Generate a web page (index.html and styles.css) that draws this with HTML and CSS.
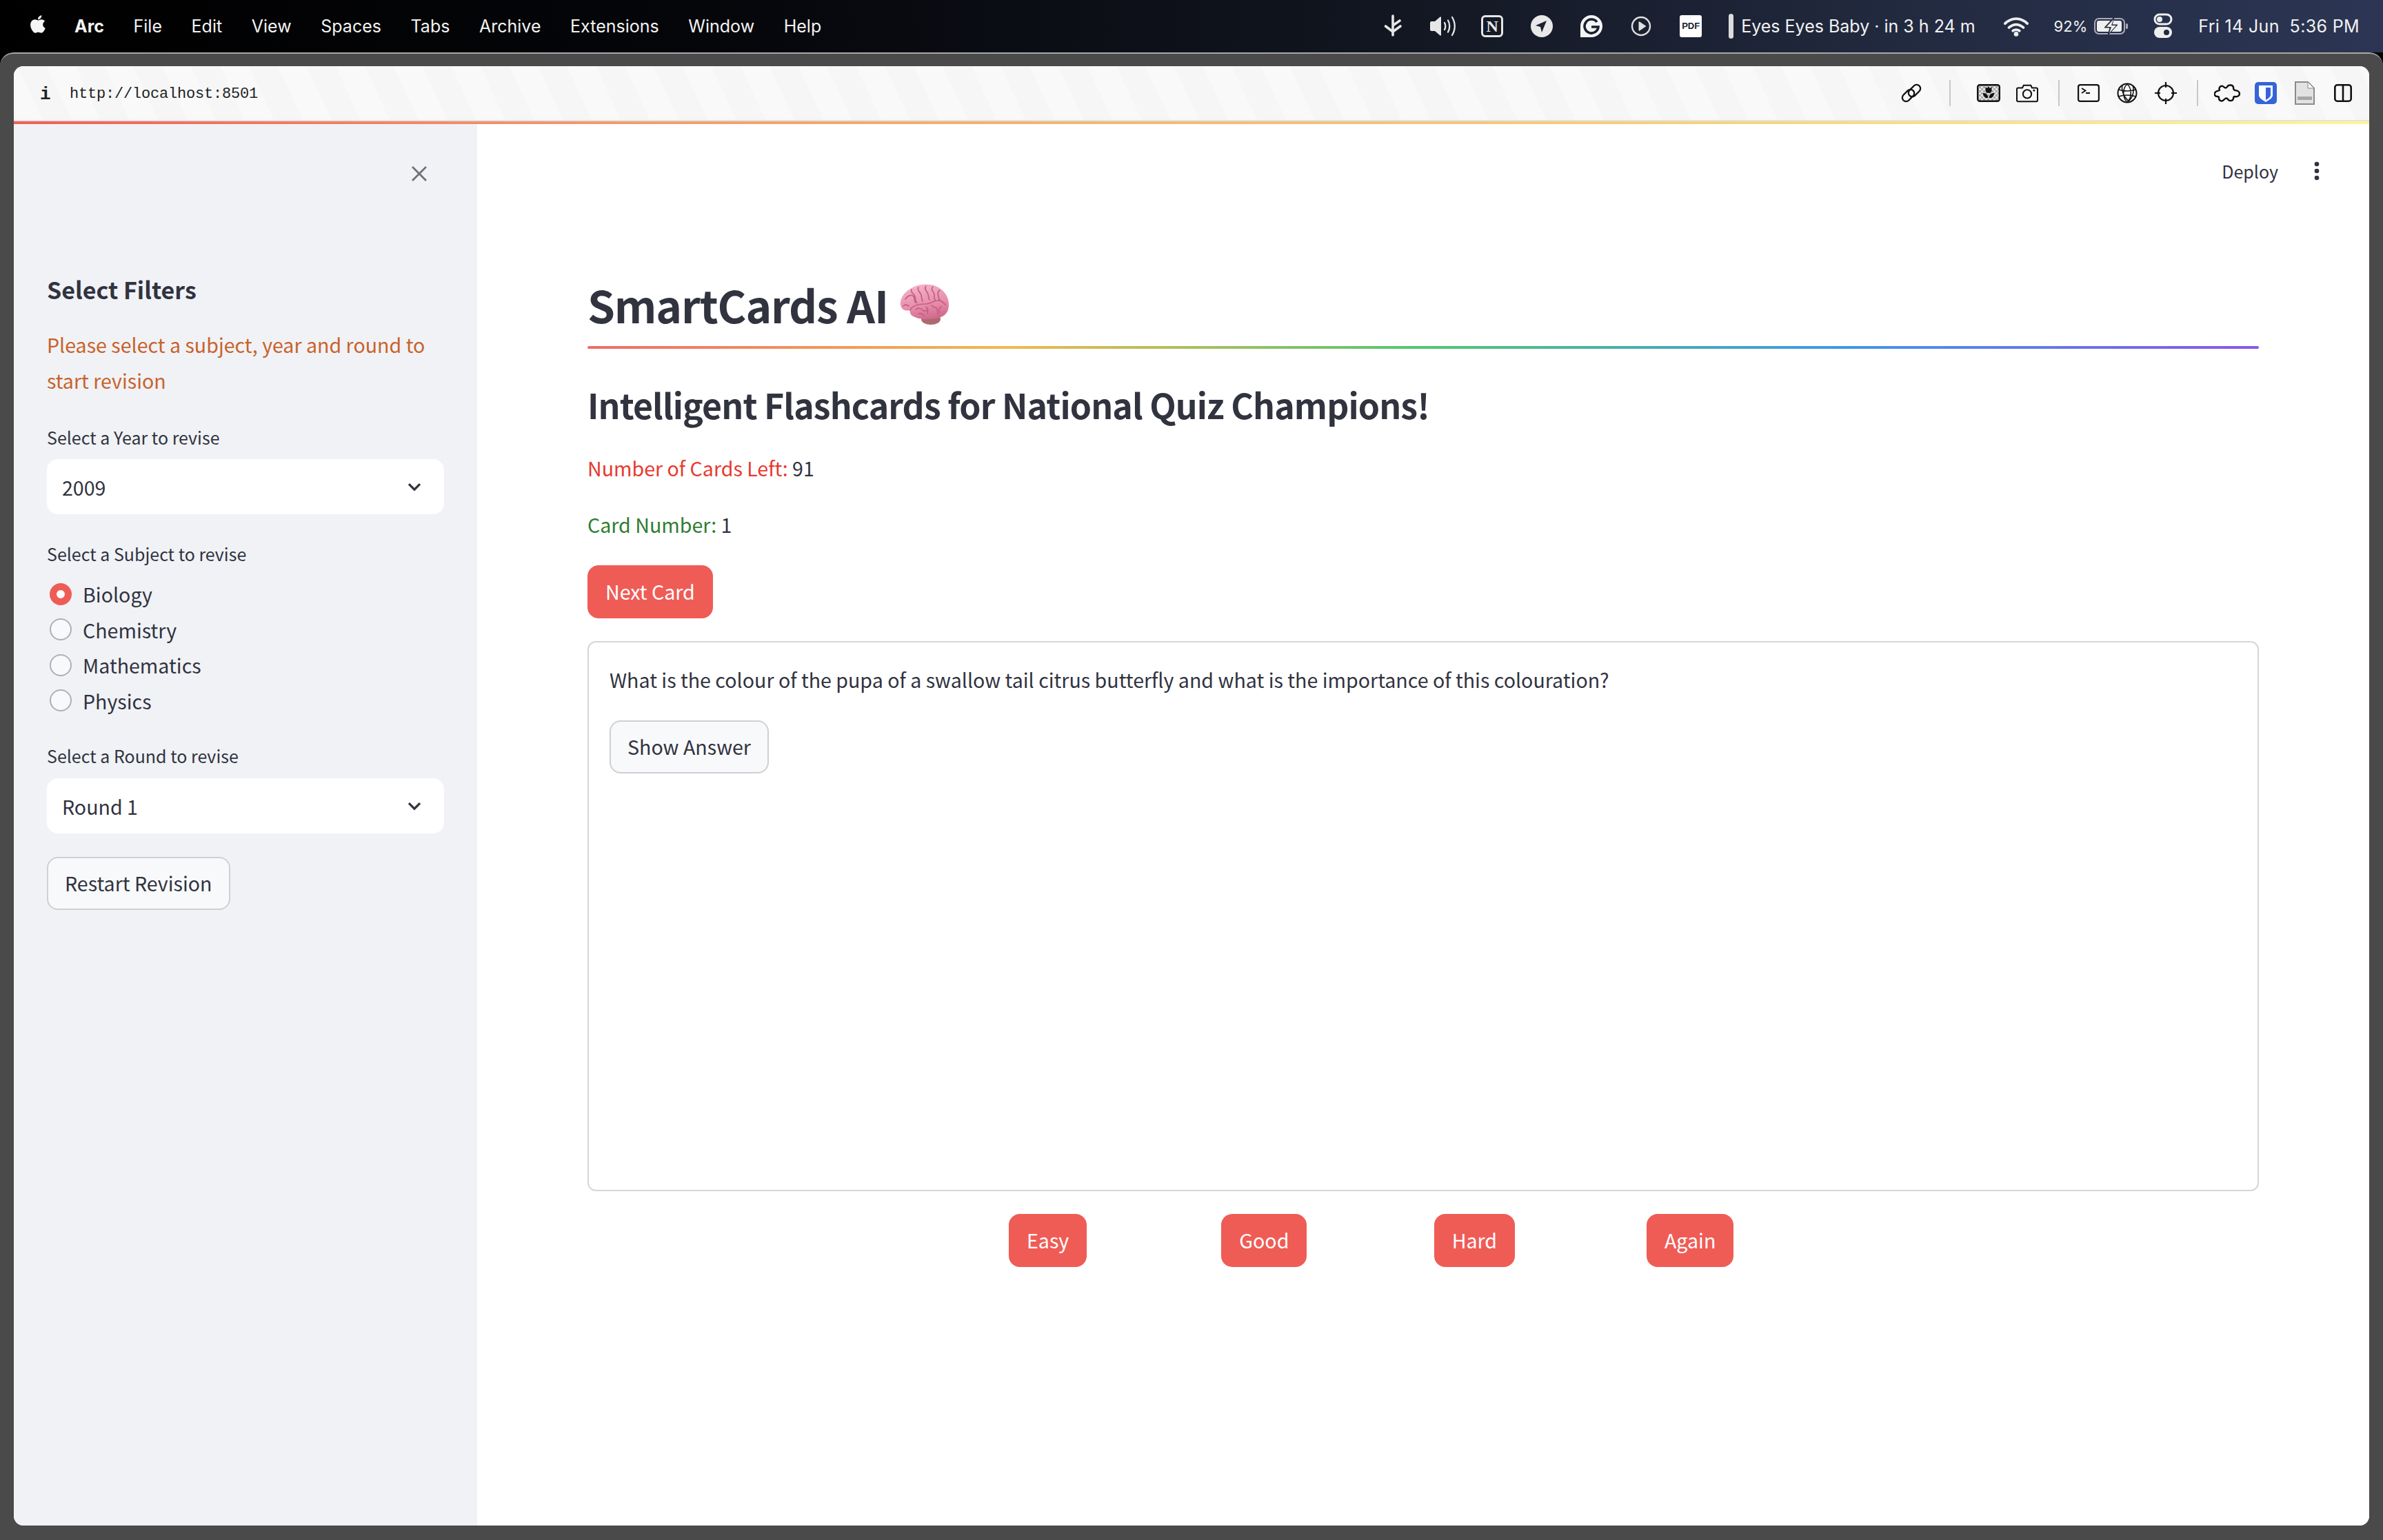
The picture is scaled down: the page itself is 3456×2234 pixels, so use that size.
FILE: index.html
```html
<!DOCTYPE html>
<html lang="en">
<head>
<meta charset="utf-8">
<title>SmartCards AI</title>
<link rel="stylesheet" href="styles.css">
</head>
<body>
<header class="menubar">
  <svg class="apple" viewBox="0 0 24 24"><path d="M17.05 20.28c-.98.95-2.05.8-3.08.35-1.09-.46-2.09-.48-3.24 0-1.44.62-2.2.44-3.06-.35C2.79 15.25 3.51 7.59 9.05 7.31c1.35.07 2.29.74 3.08.8 1.18-.24 2.31-.93 3.57-.84 1.51.12 2.65.72 3.4 1.8-3.12 1.87-2.38 5.98.48 7.13-.57 1.5-1.31 2.99-2.54 4.09zM12.03 7.25c-.15-2.23 1.66-4.07 3.74-4.25.29 2.58-2.34 4.5-3.74 4.25z"/></svg>
  <nav class="menus">
    <span class="menu-app">Arc</span><span>File</span><span>Edit</span><span>View</span><span>Spaces</span><span>Tabs</span><span>Archive</span><span>Extensions</span><span>Window</span><span>Help</span>
  </nav>
  <div class="status">
    <div class="status-icons">
      <svg viewBox="0 0 40 40"><path d="M20 5v28M20 19l10-7M9.500 20 20 28M31 20l-11 8" fill="none" stroke="#e6e6e6" stroke-width="3.600" stroke-linecap="round"/></svg>
      <svg viewBox="0 0 40 40"><path d="M2 15a2 2 0 0 1 2-2h5l7-6a1 1 0 0 1 2 1v24a1 1 0 0 1-2 1l-7-6H4a2 2 0 0 1-2-2z" fill="#e6e6e6"/><path d="M23 15c1.500 3 1.500 7 0 10M28 11.500c3 5 3 12 0 17M34 7c5 8 5 18 0 26" fill="none" stroke="#e6e6e6" stroke-width="2.300" stroke-linecap="round"/></svg>
      <div class="notion-icon">N</div>
      <svg viewBox="0 0 40 40"><circle cx="20" cy="20" r="16" fill="#e8e8e8"/><path d="M27 12 11 19l7 2 2 8z" fill="#1a2030"/></svg>
      <svg viewBox="0 0 40 40"><path d="M20 4a16 16 0 0 1 0 32H4V20A16 16 0 0 1 20 4z" fill="#f4f4f4"/><path d="M28 14a10 10 0 1 0 2 7H20" fill="none" stroke="#1a2030" stroke-width="3.600"/></svg>
      <svg viewBox="0 0 40 40"><circle cx="20" cy="20" r="13" fill="none" stroke="#e0e0e0" stroke-width="2.400"/><path d="M16.500 14a1 1 0 0 1 1.500-.5l8 5.500a1 1 0 0 1 0 2l-8 5.500a1 1 0 0 1-1.500-.5z" fill="#e0e0e0"/></svg>
      <div class="pdf-icon">PDF</div>
    </div>
    <i class="now-bar"></i>
    <span class="now-text">Eyes Eyes Baby · in 3 h 24 m</span>
    <svg class="wifi" viewBox="0 0 40 32"><path d="M3 12c10-10 24-10 34 0M9 18c7-6 15-6 22 0M15 23c3-2 7-2 10 0" fill="none" stroke="#eee" stroke-width="4" stroke-linecap="round"/><circle cx="20" cy="28" r="3.500" fill="#eee"/></svg>
    <span class="batt-text">92%</span>
    <svg class="battery" viewBox="0 0 50 26"><rect x="1" y="2" width="43" height="22" rx="6" fill="none" stroke="#aab" stroke-width="2"/><rect x="4" y="5" width="36" height="16" rx="3" fill="#eee"/><path d="M29 0 15 15h8l-3 11 14-15h-8z" fill="#222a40" stroke="#222a40"/><path d="M28 3 18 14h7l-3 9 10-11h-7z" fill="#eee"/><rect x="46" y="9" width="3" height="8" rx="1.500" fill="#aab"/></svg>
    <svg class="control" viewBox="0 0 30 40"><rect x="3" y="3" width="24" height="14" rx="7" fill="none" stroke="#eee" stroke-width="3"/><circle cx="10" cy="10" r="4" fill="#eee"/><rect x="2" y="21" width="26" height="16" rx="8" fill="#eee"/><circle cx="20" cy="29" r="4" fill="#222a40"/></svg>
    <span class="clock">Fri 14 Jun&nbsp; 5:36 PM</span>
  </div>
</header>

<div class="window">
  <div class="browser">
    <div class="toolbar">
      <span class="info">i</span>
      <span class="url">http://localhost:8501</span>
      <div class="tools">
        <svg class="tool" viewBox="0 0 32 32"><g fill="none" stroke="#111" stroke-width="2.300"><rect x="-1" y="-5.500" width="20" height="11" rx="5.500" transform="translate(8 23) rotate(-45) translate(-4 0)"/><rect x="-15" y="-5.500" width="20" height="11" rx="5.500" transform="translate(24 9) rotate(-45) translate(0 0)"/></g></svg>
        <i class="tool-sep tool-sep-even"></i>
        <svg class="tool tool-tulip" viewBox="0 0 34 26"><defs><pattern id="chk" width="6" height="6" patternUnits="userSpaceOnUse"><rect width="6" height="6" fill="#e6e6e6"/><rect width="3" height="3" fill="#a9a9a9"/><rect x="3" y="3" width="3" height="3" fill="#a9a9a9"/></pattern></defs><rect x="1.200" y="1.200" width="31.600" height="23.600" rx="3" fill="url(#chk)" stroke="#111" stroke-width="2.400"/><path d="M12.500 4l2.500 2 2-2.500L19 6l2.500-2v5c0 2.500-2 4-4.500 4s-4.500-1.500-4.500-4zM9 13c3.500 0 6.500 1.500 7.500 7h-3C11 19.500 9 17 9 13zM25 13c-3.500 0-6.500 1.500-7.500 7h3C23 19.500 25 17 25 13z" fill="#111"/></svg>
        <svg class="tool" viewBox="0 0 34 28"><path d="M3 6h6.500l2-4h11l2 4H31a2 2 0 0 1 2 2v17a2 2 0 0 1-2 2H3a2 2 0 0 1-2-2V8a2 2 0 0 1 2-2z" fill="none" stroke="#111" stroke-width="2.200"/><circle cx="17" cy="15.500" r="6.500" fill="none" stroke="#111" stroke-width="2.200"/><circle cx="27.500" cy="10" r="1.500" fill="#111"/></svg>
        <i class="tool-sep"></i>
        <svg class="tool" viewBox="0 0 32 26"><rect x="1.100" y="1.100" width="29.800" height="23.800" rx="3" fill="none" stroke="#111" stroke-width="2.200"/><path d="M6 6l5.500 3.500L6 13M12 13h6" fill="none" stroke="#111" stroke-width="1.900"/></svg>
        <svg class="tool" viewBox="0 0 32 32"><circle cx="16" cy="16" r="13.500" fill="none" stroke="#111" stroke-width="2"/><path d="M16 3c-7 6-7 20 0 26 7-6 7-20 0-26zM3.500 11c8 2.500 17 2.500 25 0M3.500 21c8-2.500 17-2.500 25 0M9 5c-2 8 3 18 10 23M24 5c3 8 0 17-6 23" fill="none" stroke="#111" stroke-width="1.500"/></svg>
        <svg class="tool" viewBox="0 0 32 32"><circle cx="16" cy="16" r="11" fill="none" stroke="#111" stroke-width="2.200"/><path d="M16 0v8M16 24v8M0 16h8M24 16h8" stroke="#111" stroke-width="2.200"/></svg>
        <i class="tool-sep"></i>
        <svg class="tool tool-wide" viewBox="0 0 38 26"><path d="M8 9C6 4 11 1 14 4 16 6 18 6 19 4 21 0 28 1 28 5 28 7 28 8 30 9 34 9 37 11 37 14 37 17 33 19 30 18 28 18 28 20 28 21 27 25 22 25 20 22 19 20 17 20 15 22 12 26 7 25 7 20 7 18 6 18 5 18 1 18 0 15 1 13 2 10 6 10 8 9Z" fill="none" stroke="#111" stroke-width="2.400" stroke-linejoin="round"/></svg>
        <svg class="tool" viewBox="0 0 32 32"><rect width="32" height="32" rx="5" fill="#3563d8"/><path d="M6 5h20v14c0 4-5 7-10 10-5-3-10-6-10-10z" fill="#fff"/><path d="M16 8h7v11c0 2-3 5-7 7z" fill="#3563d8"/></svg>
        <svg class="tool tool-doc" viewBox="0 0 30 34"><path d="M2 1h18l9 9v23H2z" fill="#e2e2e2" stroke="#8a8a8a" stroke-width="2"/><path d="M20 1v9h9z" fill="#f6f6f6" stroke="#8a8a8a" stroke-width="1"/><rect x="5" y="22" width="21" height="5" fill="#a8a8a8"/></svg>
        <svg class="tool tool-split" viewBox="0 0 26 26"><rect x="1.300" y="1.300" width="23.400" height="23.400" rx="3.500" fill="none" stroke="#111" stroke-width="2.600"/><path d="M13 1v24" stroke="#111" stroke-width="2.600"/></svg>
      </div>
    </div>
    <div class="glow-line"></div>
    <div class="app">
      <aside class="sidebar">
        <div class="close-row">
          <svg class="close-x" viewBox="0 0 40 40"><path d="M10 10l20 20M30 10 10 30" stroke="#6e7079" stroke-width="2.800"/></svg>
        </div>
        <h3 class="side-title">Select Filters</h3>
        <p class="side-note">Please select a subject, year and round to start revision</p>
        <label class="field-label field-year">Select a Year to revise</label>
        <div class="select select-year"><span>2009</span><svg class="chev" viewBox="0 0 20 14"><path d="M2.500 3 10 10.500 17.500 3" fill="none" stroke="#31333f" stroke-width="3"/></svg></div>
        <label class="field-label field-subject">Select a Subject to revise</label>
        <div class="radios">
          <div class="radio"><i class="dot dot-on"></i><span>Biology</span></div>
          <div class="radio"><i class="dot"></i><span>Chemistry</span></div>
          <div class="radio"><i class="dot"></i><span>Mathematics</span></div>
          <div class="radio"><i class="dot"></i><span>Physics</span></div>
        </div>
        <label class="field-label field-round">Select a Round to revise</label>
        <div class="select select-round"><span>Round 1</span><svg class="chev" viewBox="0 0 20 14"><path d="M2.500 3 10 10.500 17.500 3" fill="none" stroke="#31333f" stroke-width="3"/></svg></div>
        <button class="btn btn-light btn-restart">Restart Revision</button>
      </aside>
      <main class="main">
        <div class="app-head">
          <span class="deploy">Deploy</span>
          <svg class="kebab" viewBox="0 0 12 32"><circle cx="6" cy="6" r="3.300" fill="#31333f"/><circle cx="6" cy="16" r="3.300" fill="#31333f"/><circle cx="6" cy="26" r="3.300" fill="#31333f"/></svg>
        </div>
        <div class="content">
          <h1 class="title">SmartCards AI
            <svg class="brain" viewBox="0 0 71 59">
              <defs>
                <linearGradient id="bg" x1="0.300" y1="0" x2="0.600" y2="1"><stop offset="0" stop-color="#f4b4c8"/><stop offset="0.600" stop-color="#e88daa"/><stop offset="1" stop-color="#cf6a8c"/></linearGradient>
              </defs>
              <ellipse cx="45" cy="51" rx="14" ry="8" fill="#ad6a6e"/>
              <path d="M1 30C0 20 8 10 17 6 26 0 42-1 52 3 64 8 71 18 71 30 71 40 66 47 56 49 46 52 30 52 22 48 16 46 14 42 15 38 8 40 2 37 1 30Z" fill="url(#bg)"/>
              <path d="M15 38C18 31 28 29 37 29 45 29 47 25 54 24 60 23 63 27 66 30M8 22c4-6 9-7 12-4 2 3 0 7 3 9M17 8c-2 5 4 6 5 10s0 7 3 9M27 5c-3 4 3 7 4 11 1 3 0 6 2 9M38 3c-4 4 2 8 3 12 1 3 0 5 2 8M48 4c-4 4 1 7 2 11 0 3-1 5 1 8M58 9c-4 2-3 6-2 9 1 2 0 4 2 5M5 32c3-3 5-2 8 0M23 37c3-3 8-2 10 1 2 2 6 1 8-1M38 33c3 3 3 6 2 10M46 31c2 3 6 2 8 5 1 3 0 6 2 9M60 33c-3 2-4 5-2 8M27 43c3-1 6 0 8 3" fill="none" stroke="#c25f85" stroke-width="1.700" stroke-linecap="round"/>
            </svg>
          </h1>
          <div class="rainbow"></div>
          <h2 class="subtitle">Intelligent Flashcards for National Quiz Champions!</h2>
          <p class="stat stat-first"><span class="red">Number of Cards Left:</span> 91</p>
          <p class="stat stat-second"><span class="green">Card Number:</span> 1</p>
          <button class="btn btn-primary btn-next">Next Card</button>
          <section class="card">
            <p class="question">What is the colour of the pupa of a swallow tail citrus butterfly and what is the importance of this colouration?</p>
            <button class="btn btn-light btn-show">Show Answer</button>
          </section>
          <div class="grades">
            <div><button class="btn btn-primary">Easy</button></div>
            <div><button class="btn btn-primary">Good</button></div>
            <div><button class="btn btn-primary">Hard</button></div>
            <div><button class="btn btn-primary">Again</button></div>
          </div>
        </div>
      </main>
    </div>
  </div>
</div>
</body>
</html>
```

FILE: styles.css
```css
* { box-sizing: border-box; }
html, body { margin: 0; padding: 0; }
body {
  width: 3456px;
  height: 2234px;
  overflow: hidden;
  background: #000;
  font-family: "Noto Sans CJK SC", "Noto Sans", sans-serif;
  color: #31333f;
  display: flex;
  flex-direction: column;
}

/* macOS menu bar */
.menubar {
  height: 76px;
  flex: none;
  display: flex;
  align-items: center;
  padding-left: 38px;
  padding-right: 34px;
  background: linear-gradient(90deg, #000 0%, #05060a 30%, #11151f 57%, #222a40 80%, #2c3654 100%);
  color: #f2f2f2;
  font-family: Inter, "Liberation Sans", sans-serif;
  font-size: 25px;
}
.apple { width: 34px; height: 34px; fill: #f5f5f5; margin-top: -6px; }
.menus { display: flex; gap: 42.600px; margin-left: 36px; }
.menu-app { font-weight: 700; }
.status { margin-left: auto; display: flex; align-items: center; }
.status-icons { display: flex; align-items: center; gap: 32px; }
.status-icons svg { width: 40px; height: 40px; display: block; }
.notion-icon {
  width: 32px; height: 32px; margin: 0 4px;
  border: 3px solid #e6e6e6; border-radius: 6px;
  color: #e6e6e6;
  font: 700 24px/26px "Liberation Serif", serif;
  text-align: center;
}
.pdf-icon {
  width: 32px; height: 32px; margin-left: 4px;
  background: #fff; color: #1a2030; border-radius: 3px;
  font: 700 13px/32px "Liberation Sans", sans-serif; text-align: center;
}
.now-bar { width: 7px; height: 36px; background: #ddd; border-radius: 4px; margin-left: 39px; }
.now-text { margin-left: 11px; white-space: nowrap; }
.wifi { width: 38px; height: 32px; margin-left: 40px; }
.batt-text { margin-left: 36px; font-size: 22px; }
.battery { width: 50px; height: 26px; margin-left: 10px; }
.control { width: 30px; height: 40px; margin-left: 35px; }
.clock { margin-left: 36px; white-space: nowrap; letter-spacing: 0.350px; }

/* browser window */
.window {
  flex: 1;
  background: #4a4a4a;
  border-top: 2px solid #a8a8a8;
  border-radius: 20px 20px 0 0;
  padding: 18px 20px 21px;
  display: flex;
}
.browser {
  flex: 1;
  background: #fff;
  border-radius: 14px;
  overflow: hidden;
  display: flex;
  flex-direction: column;
}
.toolbar {
  height: 80px;
  flex: none;
  display: flex;
  align-items: center;
  padding-left: 38px;
  border-bottom: 2px solid #e2e2e2;
  background: repeating-linear-gradient(65deg, #f9f9f9 0 38px, #f6f6f6 38px 76px);
  color: #222;
}
.info { font: 700 26px "Liberation Mono", monospace; width: 43px; padding-top: 3px; }
.url { font: 22px "Liberation Mono", monospace; letter-spacing: -0.200px; padding-top: 3px; }
.tools { margin-left: auto; display: flex; align-items: center; padding-right: 10px; }
.tool { width: 32px; height: 32px; margin: 0 12px; display: block; }
.tool-wide { width: 38px; margin: 0 9px; }
.tool-tulip { width: 34px; margin: 0 11px; }
.tool-doc { width: 30px; height: 34px; margin: 0 13px; }
.tool-split { width: 26px; height: 26px; margin: 0 15px; }
.tool-sep { width: 2px; height: 38px; background: #c8c8c8; margin: 0 14px 0 17px; }
.tool-sep-even { margin: 0 27px; }
.glow-line {
  height: 4px;
  flex: none;
  background: linear-gradient(90deg, #ef5f58 0%, #f39a6c 25%, #f4b66e 45%, #f8cf7c 70%, #fff598 100%);
}

.app { flex: 1; display: flex; min-height: 0; }

/* sidebar */
.sidebar {
  width: 672px;
  flex: none;
  background: #f0f2f6;
  padding: 52px 48px 0;
  display: flex;
  flex-direction: column;
  align-items: stretch;
}
.close-row { height: 40px; display: flex; justify-content: flex-end; }
.close-x { width: 40px; height: 40px; margin-right: 16px; }
.side-title { margin: 122px 0 0; font-size: 34px; line-height: 52px; font-weight: 700; }
.side-note { margin: 28px 0 0; font-size: 28.600px; line-height: 52px; color: #c9622a; }
.field-label { display: block; font-size: 25px; line-height: 44px; }
.field-year { margin-top: 34px; }
.field-subject { margin-top: 35px; }
.field-round { margin-top: 32px; }
.select {
  height: 80px;
  background: #fff;
  border-radius: 16px;
  display: flex;
  align-items: center;
  justify-content: space-between;
  padding: 0 32px 0 22px;
  font-size: 28.600px;
}
.select-year { margin-top: 10px; }
.select-round { margin-top: 11px; }
.chev { width: 22px; height: 15px; }
.radios { margin-top: 11px; display: flex; flex-direction: column; }
.radio { height: 51.500px; display: flex; align-items: center; font-size: 28.600px; padding-left: 4px; }
.dot {
  width: 32px; height: 32px; border-radius: 50%;
  background: #f8f9fb; border: 2px solid #aeb0b7;
  margin-right: 16px; flex: none;
}
.dot-on { border: 10px solid #ef5c56; background: #fff; }

/* buttons */
.btn {
  font: inherit;
  font-size: 28.600px;
  line-height: 44px;
  height: 77px;
  padding: 0 24px 2px;
  border-radius: 16px;
  cursor: pointer;
  white-space: nowrap;
}
.btn-primary { background: #ef5c56; color: #fff; border: 2px solid #ef5c56; }
.btn-light { background: #f8f9fb; color: #31333f; border: 2px solid #cfd0d4; }
.btn-restart { align-self: flex-start; margin-top: 34px; }

/* main */
.main { flex: 1; min-width: 0; background: #fff; display: flex; flex-direction: column; }
.app-head {
  margin-top: 38px;
  height: 60px;
  display: flex;
  align-items: center;
  justify-content: flex-end;
  padding-right: 70px;
}
.deploy { font-size: 25px; }
.kebab { width: 12px; height: 32px; margin-left: 50px; }
.content { padding: 0 160px; display: flex; flex-direction: column; align-items: flex-start; }
.title {
  margin: 119px 0 0;
  font-size: 64px;
  line-height: 88px;
  font-weight: 700;
  letter-spacing: -1.150px;
  display: flex;
  align-items: center;
  gap: 17px;
}
.brain { width: 71px; height: 59px; }
.rainbow {
  align-self: stretch;
  height: 4px;
  margin-top: 17px;
  border-radius: 2px;
  background: linear-gradient(90deg, #ef6b66, #f2b84f, #4fc76f, #3f97ea, #8a55f0);
}
.subtitle { margin: 44px 0 0; font-size: 50px; line-height: 72px; font-weight: 700; letter-spacing: -0.900px; }
.stat { margin: 0; font-size: 28.600px; line-height: 52px; }
.stat-first { margin-top: 31px; }
.stat-second { margin-top: 30px; }
.red { color: #e8392f; }
.green { color: #2e7d32; }
.btn-next { margin-top: 33px; }
.card {
  align-self: stretch;
  height: 798px;
  margin-top: 33px;
  border: 2px solid #d5d6d8;
  border-radius: 12px;
  padding: 28px 30px 30px;
}
.question { margin: 0; font-size: 28.600px; line-height: 52px; }
.btn-show { margin-top: 33px; }
.grades {
  margin-top: 33px;
  padding-left: 611px;
  display: grid;
  grid-template-columns: repeat(4, 308.330px);
}
```
